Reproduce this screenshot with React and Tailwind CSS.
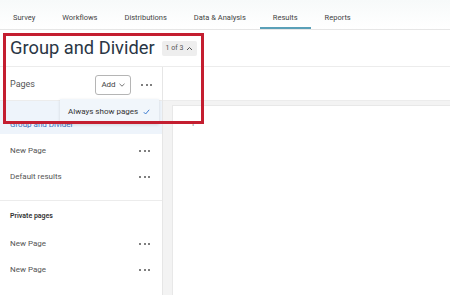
import React from "react";

const tabs = ["Survey", "Workflows", "Distributions", "Data & Analysis", "Results", "Reports"];

const Dots = () => (
  <span className="flex items-center gap-[2.5px]">
    <span className="w-[2px] h-[2px] rounded-full bg-[#555]" />
    <span className="w-[2px] h-[2px] rounded-full bg-[#555]" />
    <span className="w-[2px] h-[2px] rounded-full bg-[#555]" />
  </span>
);

const PageRow = ({ label }) => (
  <div className="h-[26px] flex items-center justify-between pl-[10px] pr-[12px] text-[8px] text-[#555]">
    <span>{label}</span>
    <Dots />
  </div>
);

export default function App() {
  return (
    <div className="relative w-[450px] h-[295px] overflow-hidden bg-white font-['Roboto',sans-serif]">
      {/* Top nav */}
      <nav className="h-[30px] flex items-stretch border-b border-[#e6e6e6] bg-gradient-to-b from-[#f7fafa] to-white pl-[13px] gap-[27px] text-[7.5px] text-[#444]">
        {tabs.map((t) => (
          <div
            key={t}
            className={`flex items-center pt-[9px] whitespace-nowrap ${t === "Results" ? "border-b-2 border-[#5aa0b8] px-[13px] -mx-[13px]" : "border-b-2 border-transparent"}`}
          >
            {t}
          </div>
        ))}
      </nav>

      {/* Title row */}
      <div className="h-[37px] flex items-center pl-[10px] gap-[7px] border-b border-[#ececec]">
        <h1 className="text-[18.3px] text-[#2a3645] leading-none whitespace-nowrap">Group and Divider</h1>
        <span className="flex items-center gap-[3px] bg-[#eeeeee] rounded-[2px] px-[4px] h-[15px] text-[7px] text-[#555] whitespace-nowrap">
          1 of 3
          <svg width="7" height="5" viewBox="0 0 7 5" fill="none">
            <path d="M1 4 L3.5 1.5 L6 4" stroke="#555" strokeWidth="1" />
          </svg>
        </span>
      </div>

      <div className="flex h-[228px]">
        {/* Sidebar */}
        <aside className="w-[163px] border-r border-[#e6e6e6] flex flex-col">
          <div className="h-[34px] flex items-center justify-between pl-[10px] pr-[10px] pt-[3px] border-b border-[#ececec]">
            <span className="text-[9px] text-[#555]">Pages</span>
            <div className="flex items-center gap-[10px]">
              <button className="h-[20px] w-[36px] border border-[#b5b5b5] rounded-[3px] flex items-center justify-center gap-[3px] text-[8px] text-[#444]">
                Add
                <svg width="6" height="4" viewBox="0 0 6 4" fill="none">
                  <path d="M0.5 0.8 L3 3.2 L5.5 0.8" stroke="#666" strokeWidth="0.9" />
                </svg>
              </button>
              <Dots />
            </div>
          </div>
          <div className="h-[33px] flex items-end pl-[10px] pb-[3px] bg-[#eef4fb] text-[8px] text-[#3a6fb8] whitespace-nowrap">
            Group and Divider
          </div>
          <div className="pt-[4px]">
            <PageRow label="New Page" />
            <PageRow label="Default results" />
          </div>
          <div className="mt-[10px] border-t border-[#ececec] pt-[10px]">
            <div className="pl-[10px] text-[7px] font-semibold text-[#333]">Private pages</div>
            <div className="pt-[9px]">
              <PageRow label="New Page" />
              <PageRow label="New Page" />
            </div>
          </div>
        </aside>

        {/* Main area */}
        <main className="flex-1 flex flex-col">
          <div className="h-[34px] border-b border-[#ececec]" />
          <div className="flex-1 bg-[#f3f3f3] pl-[9px] pt-[4px]">
            <div className="h-full bg-white border-l border-t border-[#e8e8e8] pl-[19px] pt-[14px]">
              <span className="block text-[8px] text-[#888] leading-none">I</span>
            </div>
          </div>
        </main>
      </div>

      {/* Dropdown popover */}
      <div className="absolute left-[60px] top-[99px] w-[99px] h-[25px] bg-[#f1f6fb] shadow-[0_1px_3px_rgba(0,0,0,0.12)] flex items-center justify-between pl-[8px] pr-[9px] text-[8px] text-[#333] whitespace-nowrap">
        <span>Always show pages</span>
        <svg width="7" height="6" viewBox="0 0 7 6" fill="none">
          <path d="M0.8 3.2 L2.6 5 L6.2 0.8" stroke="#3b7bd0" strokeWidth="1" />
        </svg>
      </div>

      {/* Highlight rectangle */}
      <div className="absolute left-[3px] top-[33px] w-[201px] h-[91px] border-[3px] border-[#c41e30] pointer-events-none" />
    </div>
  );
}
